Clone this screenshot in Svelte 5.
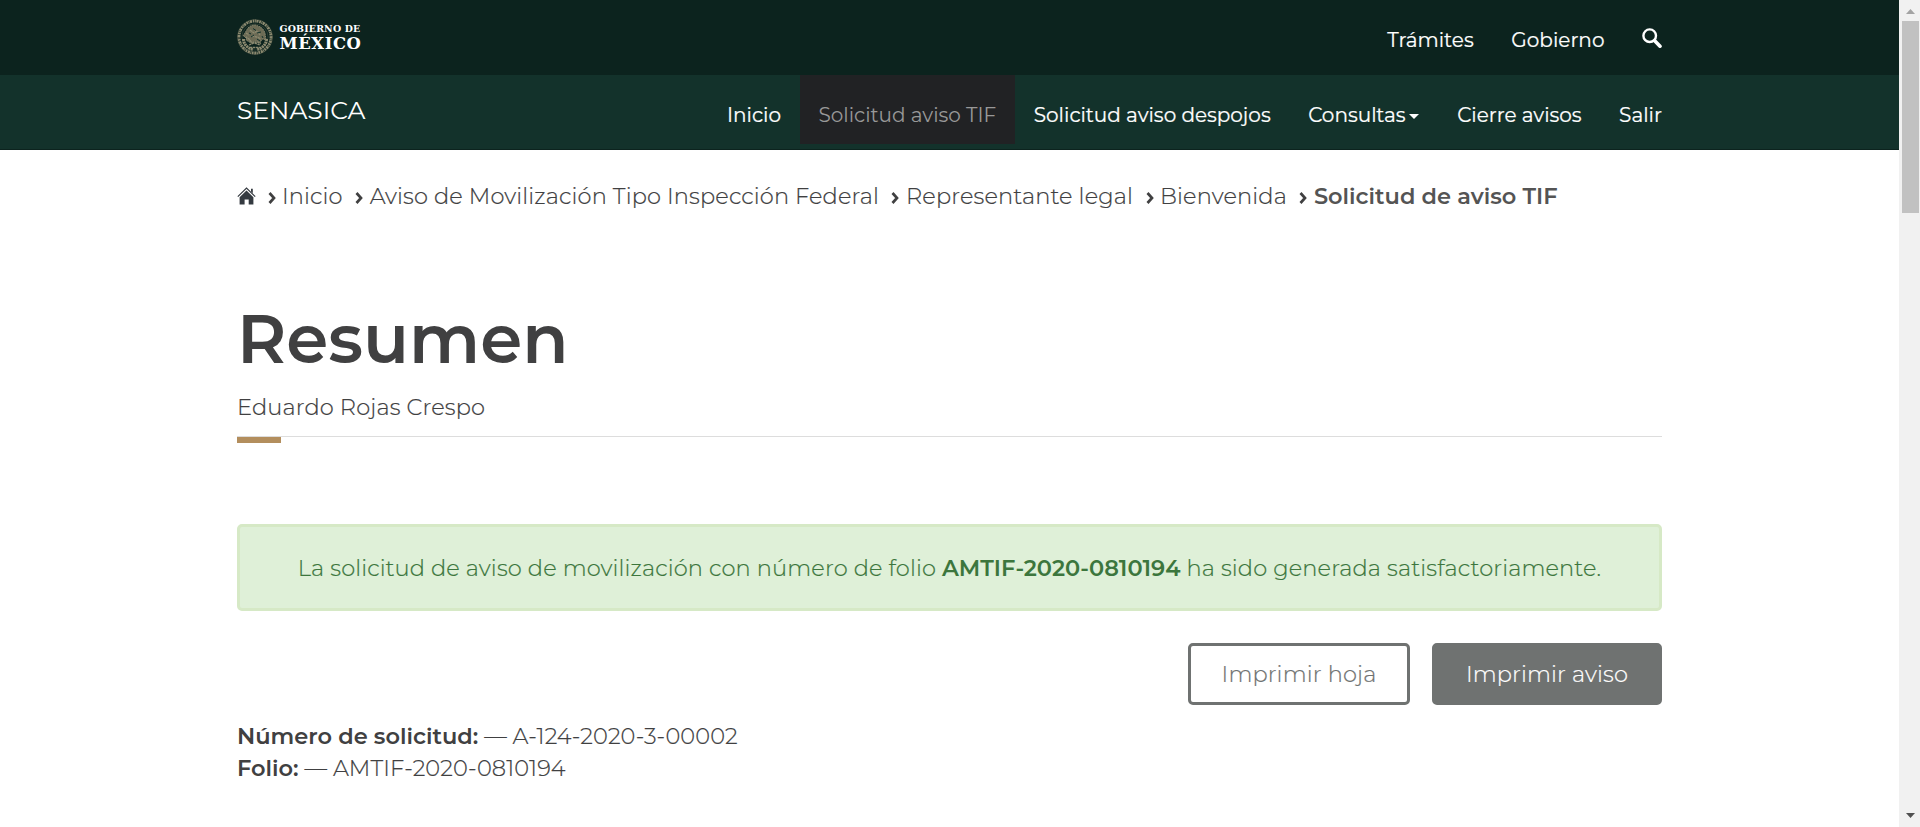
<script>
  const topLinks = ['Trámites', 'Gobierno'];
  const menu = [
    { text: 'Inicio' },
    { text: 'Solicitud aviso TIF', active: true },
    { text: 'Solicitud aviso despojos' },
    { text: 'Consultas', caret: true },
    { text: 'Cierre avisos' },
    { text: 'Salir' }
  ];
  const crumbs = [
    'Inicio',
    'Aviso de Movilización Tipo Inspección Federal',
    'Representante legal',
    'Bienvenida',
    'Solicitud de aviso TIF'
  ];
  const details = [
    { label: 'Número de solicitud:', value: 'A-124-2020-3-00002' },
    { label: 'Folio:', value: 'AMTIF-2020-0810194' }
  ];
</script>

<div class="screen">
  <div class="page">
    <header class="top">
      <div class="wrap">
        <div class="brand">
          <svg class="seal" viewBox="0 0 36 36" width="36" height="36" fill="none" stroke="#8c8a70">
            <circle cx="18" cy="18" r="16" stroke-width="2.8" stroke-dasharray="1.7 .6 .9 .5 2.2 .7" />
            <circle cx="18" cy="18" r="17.4" stroke-width=".5" opacity=".6" />
            <circle cx="18" cy="18" r="13.1" stroke-width=".5" opacity=".5" />
            <path d="M6.5 20c0 5 4 9.500 9.500 10.500M29.500 20c0 5-4 9.500-9.500 10.500" stroke-width="3" stroke-dasharray="2 .6" />
            <path d="M11 9c3-3 7-4 10-2 4 1 6 4 7 7l1 7-4-1-2 4-4-2-5 2-5-3 1-3-4-1c2-3 3-5 5-8z" fill="#6c6b55" stroke-width=".9" stroke-dasharray="1.6 .8" />
            <path d="M13 11l4 3 3-2 3 4M15 17l5 1 4 2M9 14l3 2M8 18l4 2 3 4 5-1 4 2M12 26l5-2 6 2M13 28.500h10" stroke-width="1.3" stroke-dasharray="2.4 .6" />
            <path d="M16 9.500l3 2M20 14l4-1M17 16l-3 2M20 20l3 2M12 14l2 1M25 17l1 2" stroke="#10312b" stroke-width="1" />
          </svg>
          <div class="brand-text"><span class="small">GOBIERNO DE</span><span class="large">MÉXICO</span></div>
        </div>
        <nav class="top-nav">
          {#each topLinks as l}
            <a>{l}</a>
          {/each}
          <svg class="search" viewBox="0 0 20 20" width="20" height="20" fill="none" stroke="#fff">
            <circle cx="7.7" cy="7.7" r="6.3" stroke-width="2.4" />
            <path d="M12.700 12.700l5.300 5.500" stroke-width="3.6" stroke-linecap="round" />
          </svg>
        </nav>
      </div>
    </header>

    <div class="sub">
      <div class="wrap">
        <a class="site">SENASICA</a>
        <nav class="menu">
          {#each menu as m}
            <a class:active={m.active}>{m.text}{#if m.caret}<span class="caret"></span>{/if}</a>
          {/each}
        </nav>
      </div>
    </div>

    <main>
      <div class="crumbs">
        <svg class="home" viewBox="0 0 19 18" width="19" height="18">
          <path d="M.8 9.600L9.500 1l8.700 8.600" fill="none" stroke="#343a40" stroke-width="1.200" />
          <path d="M14 1.800h1.800v4.400L14 4.500z" fill="#343a40" />
          <path d="M2.600 10.200L9.500 3.500l6.900 6.700V17.600h-4.700v-5H7.600v5h-5z" fill="#343a40" />
        </svg>
        {#each crumbs as c, i}
          <svg class="sep" viewBox="0 0 8 12" width="8" height="12"><path d="M1.500 1L6 6 1.500 11" fill="none" stroke="#404041" stroke-width="2.7" /></svg>
          <span class:current={i === crumbs.length - 1}>{c}</span>
        {/each}
      </div>

      <h1>Resumen</h1>
      <p class="user">Eduardo Rojas Crespo</p>
      <div class="rule"><span></span></div>

      <div class="alert">La solicitud de aviso de movilización con número de folio <b>AMTIF-2020-0810194</b> ha sido generada satisfactoriamente.</div>

      <div class="actions">
        <button class="outline">Imprimir hoja</button>
        <button class="solid">Imprimir aviso</button>
      </div>

      <div class="details">
        {#each details as d}
          <div><b>{d.label}</b> — {d.value}</div>
        {/each}
      </div>
    </main>
  </div>

  <div class="scrollbar">
    <svg viewBox="0 0 9 5" width="9" height="5"><path d="M0 5L4.500 0 9 5z" fill="#a3a3a3" /></svg>
    <div class="thumb"></div>
    <svg class="down" viewBox="0 0 9 5" width="9" height="5"><path d="M0 0h9L4.500 5z" fill="#505050" /></svg>
  </div>
</div>

<style>
  :global(body) { margin: 0; background: #fff; }
  * { box-sizing: border-box; }
  .screen { display: flex; height: 827px; overflow: hidden; font-family: Montserrat, Inter, sans-serif; font-size: 22.5px; font-weight: 300; color: #404041; white-space: nowrap; }
  .page { flex: 1; }
  .wrap { width: 1425px; height: 100%; margin: 0 auto; display: flex; justify-content: space-between; align-items: flex-start; }
  .top, .sub { height: 75px; color: #fff; font-size: 20px; font-weight: 400; -webkit-text-stroke: .2px; }
  .top { background: #0c231e; }
  .sub { background: #13322b; border-bottom: 1px solid #0c231e; }
  .brand { display: flex; padding-top: 19px; }
  .brand-text { font-family: "DejaVu Serif", serif; font-weight: 700; display: flex; flex-direction: column; margin: 3px 0 0 6.500px; -webkit-text-stroke: 0; }
  .small { font-size: 9.4px; line-height: 13px; letter-spacing: .2px; }
  .large { font-size: 16.4px; line-height: 17px; letter-spacing: .6px; }
  .top-nav { display: flex; padding-top: 28px; line-height: 24px; gap: 37.5px; }
  .top-nav a { letter-spacing: .04px; }
  .site { font-size: 25px; line-height: 30px; margin-top: 20px; -webkit-text-stroke: 0; }
  .menu { display: flex; line-height: 56px; margin-right: -18.75px; }
  .menu a { height: 68.5px; padding: 12px 18.75px 0; display: flex; align-items: center; }
  .menu a.active { background: #212224; color: #989898; -webkit-text-stroke: 0; }
  .caret { border: 5px solid transparent; border-top-color: #fff; border-bottom: 0; margin: 2px 1px 0 3px; }
  main { width: 1425px; margin: 0 auto; letter-spacing: .145px; }
  .crumbs, .user, .alert, .actions, .details { -webkit-text-stroke: .2px; }
  b { font-weight: 600; letter-spacing: 0; -webkit-text-stroke: 0; }
  .crumbs { display: flex; align-items: center; height: 30px; margin-top: 31px; }
  .home { margin-right: -1px; }
  .sep { margin: 4px 6.5px 0 12.5px; }
  .current { color: #545454; font-weight: 600; letter-spacing: 0; -webkit-text-stroke: 0; }
  h1 { font-size: 67.5px; font-weight: 600; line-height: 80px; margin: 88px 0 0; letter-spacing: 0; }
  .user { margin: 13px 0 0; line-height: 30px; }
  .rule { border-top: 1px solid #ddd; margin-top: 14px; height: 8px; }
  .rule span { display: block; width: 44px; height: 6px; background: #b38e5d; }
  .alert { margin-top: 80px; height: 87px; line-height: 82px; text-align: center; border: 3px solid #d6e9c6; border-radius: 5px; background: #dff0d8; color: #3c763d; }
  .actions { display: flex; justify-content: flex-end; gap: 22px; margin-top: 32px; }
  button { font: inherit; letter-spacing: .145px; height: 62px; padding: 0; border: 3px solid #6f7271; border-radius: 5px; }
  .outline { width: 222px; background: #fff; color: #6f7271; }
  .solid { width: 230px; background: #6f7271; color: #fff; }
  .details { margin-top: 15px; line-height: 32px; letter-spacing: .1px; }
  .scrollbar { width: 21px; background: #f1f1f1; display: flex; flex-direction: column; align-items: center; padding: 9px 1px 9px 2px; }
  .thumb { width: 17px; height: 192px; margin-top: 7px; background: #c1c1c1; }
  .down { margin-top: auto; }
</style>
